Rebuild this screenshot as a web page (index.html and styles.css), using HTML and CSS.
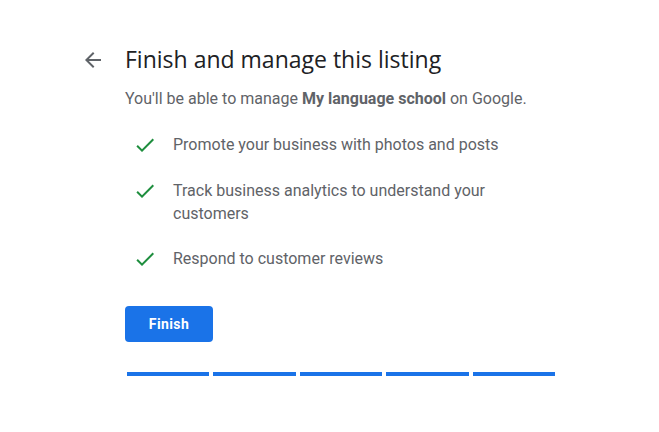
FILE: index.html
```html
<!DOCTYPE html>
<html>
<head>
<meta charset="utf-8">
<link rel="stylesheet" href="styles.css">
</head>
<body>
<div class="page">
  <div class="back">
    <svg width="24" height="24" viewBox="0 0 24 24"><path d="M20 11H7.83l5.59-5.59L12 4l-8 8 8 8 1.41-1.41L7.83 13H20v-2z" fill="#5f6368"/></svg>
  </div>
  <div class="main">
    <h1 class="title">Finish and manage this listing</h1>
    <p class="lead">You'll be able to manage <b>My language school</b> on Google.</p>
    <ul class="list">
      <li><span class="check"><svg width="24" height="24" viewBox="0 0 24 24"><path d="M9 16.17L4.83 12l-1.42 1.41L9 19 21 7l-1.41-1.41z" fill="#1e8e3e"/></svg></span><span class="txt">Promote your business with photos and posts</span></li>
      <li><span class="check"><svg width="24" height="24" viewBox="0 0 24 24"><path d="M9 16.17L4.83 12l-1.42 1.41L9 19 21 7l-1.41-1.41z" fill="#1e8e3e"/></svg></span><span class="txt">Track business analytics to understand your customers</span></li>
      <li><span class="check"><svg width="24" height="24" viewBox="0 0 24 24"><path d="M9 16.17L4.83 12l-1.42 1.41L9 19 21 7l-1.41-1.41z" fill="#1e8e3e"/></svg></span><span class="txt">Respond to customer reviews</span></li>
    </ul>
    <button class="btn">Finish</button>
    <div class="progress">
      <span class="seg"></span><span class="seg"></span><span class="seg"></span><span class="seg"></span><span class="seg"></span>
    </div>
  </div>
</div>
</body>
</html>
```
FILE: styles.css
```css
html, body { margin: 0; padding: 0; background: #fff; }
body { font-family: Roboto, "Liberation Sans", sans-serif; }
.page { display: flex; padding: 48px 0 0 81px; }
.back { width: 24px; height: 24px; margin-right: 20px; }
.back svg { display: block; }
.main { width: 440px; }
.title { margin: -3px 0 0; font-family: "Open Sans", Roboto, sans-serif; font-weight: 400; font-size: 23px; line-height: 28px; color: #202124; letter-spacing: 0; }
.lead { margin: 15px 0 0; font-size: 16px; line-height: 22px; color: #5f6368; }
.lead b { font-weight: 700; }
.list { list-style: none; margin: 23px 0 0; padding: 0; }
.list li { display: flex; align-items: flex-start; margin-bottom: 22px; }
.check { width: 24px; height: 24px; margin-left: 8px; margin-right: 16px; flex: none; }
.check svg { display: block; }
.txt { font-size: 16px; line-height: 23px; color: #5f6368; width: 350px; }
.btn { display: block; margin-top: 35px; width: 88px; height: 36px; border: 0; border-radius: 4px; background: #1a73e8; color: #fff; font-family: Roboto, sans-serif; font-weight: 700; font-size: 14px; letter-spacing: 0.4px; padding: 0; }
.progress { display: flex; gap: 4px; margin: 30px 0 0 2px; width: 428px; }
.seg { flex: 1; height: 4px; background: #1a73e8; }
```
